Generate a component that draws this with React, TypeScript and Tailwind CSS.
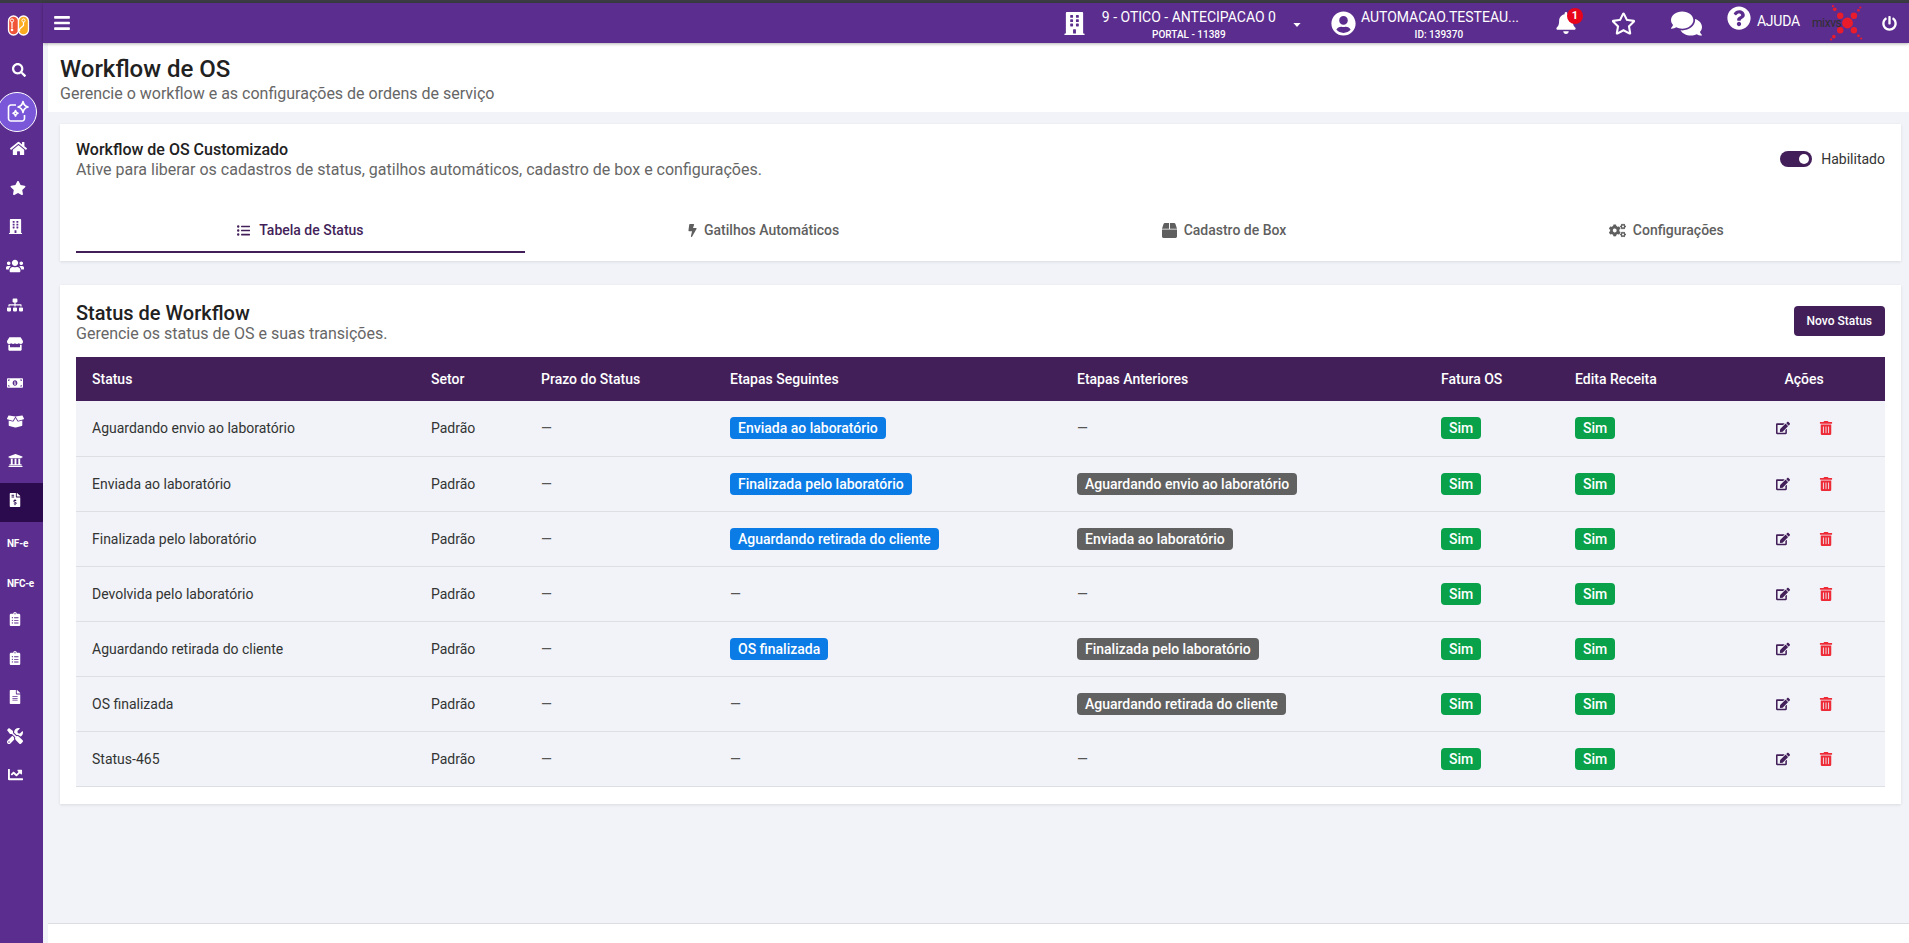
import type { ReactNode } from "react";
import {
  FaBars, FaBell, FaBolt, FaBoxOpen, FaBuilding, FaChartLine, FaClipboardList, FaCogs, FaComments,
  FaEdit, FaFileAlt, FaFileInvoiceDollar, FaHome, FaListUl, FaMoneyBillAlt, FaPowerOff, FaQuestionCircle,
  FaRegStar, FaSearch, FaSitemap, FaStar, FaStore, FaTools, FaTrashAlt, FaUniversity, FaUserCircle, FaUsers, FaBox,
} from "react-icons/fa";

type Row = { status: string; next?: string; prev?: string };

const rows: Row[] = [
  { status: "Aguardando envio ao laboratório", next: "Enviada ao laboratório" },
  { status: "Enviada ao laboratório", next: "Finalizada pelo laboratório", prev: "Aguardando envio ao laboratório" },
  { status: "Finalizada pelo laboratório", next: "Aguardando retirada do cliente", prev: "Enviada ao laboratório" },
  { status: "Devolvida pelo laboratório" },
  { status: "Aguardando retirada do cliente", next: "OS finalizada", prev: "Finalizada pelo laboratório" },
  { status: "OS finalizada", prev: "Aguardando retirada do cliente" },
  { status: "Status-465" },
];

function SideItem({ children, wide }: { children: ReactNode; wide?: boolean }) {
  return (
    <div className={`flex h-[39px] items-center justify-center text-[14px] text-white ${wide ? "pr-[7px]" : "pr-[13px]"}`}>
      {children}
    </div>
  );
}

function Logo() {
  return (
    <svg width="23" height="21" viewBox="0 0 23 21" fill="none">
      <path d="M11.500 15V6a5 5 0 0 0-10 0v9a5 5 0 0 0 10 0z" fill="#f0553a" stroke="#fff" strokeWidth="1.300" />
      <path d="M21.500 15V6a5 5 0 0 0-10 0v9a5 5 0 0 0 10 0z" fill="#fbab1f" stroke="#fff" strokeWidth="1.300" />
      <path d="M5 5.500v8M16.500 5.500v5l-4 3.500" stroke="#fff" strokeWidth="1.200" />
      <circle cx="5" cy="5.500" r="1.600" fill="#f0553a" stroke="#fff" />
      <circle cx="16.500" cy="5.500" r="1.600" fill="#fbab1f" stroke="#fff" />
      <circle cx="5" cy="15" r="1.300" fill="#fff" />
      <circle cx="12" cy="15" r="1.300" fill="#fff" />
    </svg>
  );
}

function MagicIcon() {
  return (
    <svg width="24" height="24" viewBox="0 0 24 24" fill="none" stroke="#fff" strokeWidth="1.600" strokeLinejoin="round">
      <path d="M10 5H5a2.500 2.500 0 0 0-2.500 2.500v11A2.500 2.500 0 0 0 5 21h11a2.500 2.500 0 0 0 2.500-2.500V15" />
      <path d="M17 1.500c.6 3.300 2 4.800 5 5.500-3 .7-4.400 2.200-5 5.500-.6-3.300-2-4.800-5-5.500 3-.7 4.400-2.200 5-5.500z" />
      <path d="M9.500 10.500c.3 1.700 1 2.400 2.500 2.800-1.500.4-2.200 1.100-2.500 2.700-.3-1.600-1-2.300-2.500-2.700 1.500-.4 2.200-1.100 2.500-2.800z" />
    </svg>
  );
}

function MixLogo() {
  // bolinhas vermelhas em X da marca
  const dots = [
    [39, 20, 6], [31, 12, 3.500], [46, 12, 3.500], [31, 28, 3.500], [46, 28, 3.500],
    [25, 5, 2], [51, 6, 1.500], [24, 35, 2], [51, 34, 1.500], [23, 1.500, 1.200], [53, 3, 1.200], [21, 38, 1.200], [54, 37, 1.200],
  ];
  return (
    <div className="relative ml-[12px] h-[40px] w-[51px]">
      <svg className="absolute left-0 top-0" width="51" height="40" viewBox="0 0 56 40">
        {dots.map(([x, y, r]) => (
          <circle key={`${x}-${y}`} cx={x} cy={y} r={r} fill="#ea1c2c" />
        ))}
      </svg>
      <span className="absolute left-0 top-[14px] text-[12px] leading-[12px] tracking-[-0.4px] text-[#2f2f2f]">mixvs</span>
    </div>
  );
}

function Tab({ icon, label, active }: { icon: ReactNode; label: string; active?: boolean }) {
  return (
    <div className={`flex h-[46px] flex-auto items-center justify-center gap-[7px] border-b-2 pt-[2px] text-sm font-medium ${active ? "border-[#431f5a] text-[#431f5a]" : "border-transparent text-[#5f5f5f]"}`}>
      <span className="text-[13px]">{icon}</span>
      {label}
    </div>
  );
}

function Badge({ children, color }: { children: ReactNode; color: string }) {
  return <span className={`inline-block h-[22px] rounded-[4px] px-2 text-sm font-medium leading-[22px] text-white ${color}`}>{children}</span>;
}

export default function App() {
  return (
    <div className="min-h-[943px] bg-[#f1f3f8] font-['Roboto',sans-serif]">
      <div className="h-[3px] bg-[#3b3b43]" />
      <div className="flex h-[940px]">
        {/* menu lateral */}
        <aside className="w-[43px] shrink-0 overflow-hidden bg-[#5b2d8e]">
          <div className="flex h-[40px] items-center justify-center pr-[7px] pt-[4px]">
            <Logo />
          </div>
          <div className="flex h-[49px] items-center justify-center pr-[5px] pt-[5px] text-[14px] text-white">
            <FaSearch />
          </div>
          <div className="-ml-[3px] flex h-[40px] w-[40px] items-center justify-center rounded-full border border-white bg-[#7a57d8] pl-[2px]">
            <MagicIcon />
          </div>
          <div className="-mt-[3px]">
            <SideItem wide><FaHome className="text-[17px]" /></SideItem>
            <SideItem wide><FaStar className="text-[16px]" /></SideItem>
            <SideItem><FaBuilding className="text-[15px]" /></SideItem>
            <SideItem><FaUsers className="text-[18px]" /></SideItem>
            <SideItem><FaSitemap className="text-[16px]" /></SideItem>
            <SideItem><FaStore className="text-[16px]" /></SideItem>
            <SideItem><FaMoneyBillAlt className="text-[16px]" /></SideItem>
            <SideItem><FaBoxOpen className="text-[17px]" /></SideItem>
            <SideItem><FaUniversity className="text-[15px]" /></SideItem>
            <div className="mt-[3px] flex h-[39px] items-center justify-center bg-[#2c0a4e] pb-[5px] pr-[13px] text-[14px] text-white">
              <FaFileInvoiceDollar />
            </div>
            <div className="flex h-[39px] items-center pl-[7px] pt-[3px] text-[10px] font-bold tracking-[-0.2px] text-white">NF-e</div>
            <div className="flex h-[38px] items-center pl-[7px] pt-[6px] text-[10px] font-bold tracking-[-0.3px] text-white">NFC-e</div>
            <SideItem><FaClipboardList /></SideItem>
            <SideItem><FaClipboardList /></SideItem>
            <SideItem><FaFileAlt /></SideItem>
            <SideItem><FaTools className="text-[16px]" /></SideItem>
            <SideItem><FaChartLine className="text-[15px]" /></SideItem>
          </div>
        </aside>

        <div className="flex min-w-0 flex-1 flex-col">
          {/* barra superior */}
          <header className="relative z-10 flex h-[40px] shrink-0 items-center bg-[#5b2d8e] pl-[10px] pr-[12px] text-white shadow-[0_1px_3px_rgba(0,0,0,0.3)]">
            <FaBars className="text-[18px]" />
            <div className="ml-auto flex items-center">
              <FaBuilding className="text-[23px]" />
              <div className="ml-[15px] mt-[2px] w-[176px] text-center">
                <div className="text-sm leading-[20px]">9 - OTICO - ANTECIPACAO 0</div>
                <div className="mt-[2px] text-[10px] font-medium leading-[12px]">PORTAL - 11389</div>
              </div>
              <svg className="ml-[16px] mt-[3px]" width="8" height="4" viewBox="0 0 9 5"><path d="M0 0h9L4.500 5z" fill="#fff" /></svg>
              <FaUserCircle className="ml-[30px] text-[25px]" />
              <div className="ml-[5px] mt-[2px] w-[156px] text-center">
                <div className="text-sm leading-[20px]">AUTOMACAO.TESTEAU...</div>
                <div className="mt-[2px] text-[10px] font-medium leading-[12px]">ID: 139370</div>
              </div>
              <div className="relative ml-[38px]">
                <FaBell className="text-[22px]" />
                <span className="absolute -right-[6px] -top-[4px] flex h-[16px] w-[16px] items-center justify-center rounded-full bg-[#e8041a] text-[11px] font-bold">1</span>
              </div>
              <FaRegStar className="ml-[34px] text-[25px]" />
              <FaComments className="ml-[35px] text-[31px]" />
              <FaQuestionCircle className="mb-[10px] ml-[25px] text-[24px]" />
              <span className="mb-[4px] ml-[6px] text-sm tracking-[-0.2px]">AJUDA</span>
              <MixLogo />
              <FaPowerOff className="ml-[19px] text-[15px]" />
            </div>
          </header>

          <main className="ml-[5px] flex flex-1 flex-col">
            <div className="bg-white px-[12px] pb-[9px] pt-[12px]">
              <h1 className="text-2xl font-medium leading-[29px] text-[#212121]">Workflow de OS</h1>
              <p className="text-[16px] leading-[19px] text-[#666]">Gerencie o workflow e as configurações de ordens de serviço</p>
            </div>

            <div className="flex-1 px-[12px] pr-[8px] pt-[12px]">
              <section className="bg-white px-[16px] shadow-[0_1px_3px_rgba(0,0,0,0.1)]">
                <div className="flex items-start justify-between pt-[16px]">
                  <div>
                    <h2 className="text-[16px] font-medium leading-[20px] text-[#212121]">Workflow de OS Customizado</h2>
                    <p className="text-[16px] leading-[20px] text-[#666]">Ative para liberar os cadastros de status, gatilhos automáticos, cadastro de box e configurações.</p>
                  </div>
                  <div className="mt-[11px] flex items-center gap-[9px]">
                    <div className="flex h-[16px] w-[32px] items-center justify-end rounded-full bg-[#431f5a] pr-[3px]">
                      <div className="h-[10px] w-[10px] rounded-full bg-white" />
                    </div>
                    <span className="text-sm leading-[16px] text-[#333]">Habilitado</span>
                  </div>
                </div>
                <div className="mt-[27px] flex pb-[8px]">
                  <Tab active icon={<FaListUl className="mr-[2px]" />} label="Tabela de Status" />
                  <Tab icon={<FaBolt className="-mr-[2px]" />} label="Gatilhos Automáticos" />
                  <Tab icon={<FaBox className="text-[15px]" />} label="Cadastro de Box" />
                  <Tab icon={<FaCogs className="text-[17px]" />} label="Configurações" />
                </div>
              </section>

              <section className="mt-[24px] bg-white px-[16px] pb-[17px] pt-[16px] shadow-[0_1px_3px_rgba(0,0,0,0.1)]">
                <div className="flex items-start justify-between">
                  <div>
                    <h2 className="text-xl font-medium leading-[24px] text-[#212121]">Status de Workflow</h2>
                    <p className="text-[16px] leading-[17px] text-[#666]">Gerencie os status de OS e suas transições.</p>
                  </div>
                  <button className="mt-[5px] h-[30px] rounded-[4px] bg-[#431f5a] px-[13px] text-xs font-medium text-white">Novo Status</button>
                </div>

                <table className="mt-[15px] w-full table-fixed border-collapse text-left text-sm text-[#333]">
                  <colgroup>
                    <col className="w-[339px]" />
                    <col className="w-[110px]" />
                    <col className="w-[189px]" />
                    <col className="w-[347px]" />
                    <col className="w-[364px]" />
                    <col className="w-[134px]" />
                    <col className="w-[164px]" />
                    <col />
                  </colgroup>
                  <thead className="bg-[#431f5a] text-white">
                    <tr className="h-[44px] font-medium">
                      <th className="pl-[16px] font-medium">Status</th>
                      <th className="pl-[16px] font-medium">Setor</th>
                      <th className="pl-[16px] font-medium">Prazo do Status</th>
                      <th className="pl-[16px] font-medium">Etapas Seguintes</th>
                      <th className="pl-[16px] font-medium">Etapas Anteriores</th>
                      <th className="pl-[16px] font-medium">Fatura OS</th>
                      <th className="pl-[16px] font-medium">Edita Receita</th>
                      <th className="text-center font-medium">Ações</th>
                    </tr>
                  </thead>
                  <tbody>
                    {rows.map((r) => (
                      <tr key={r.status} className="h-[55px] border-b border-[#dedfe3] bg-[#f1f3f8]">
                        <td className="pl-[16px]">{r.status}</td>
                        <td className="pl-[16px]">Padrão</td>
                        <td className="pl-[16px] text-[#555]">—</td>
                        <td className="pl-[16px] text-[#555]">{r.next ? <Badge color="bg-[#0b7be6]">{r.next}</Badge> : "—"}</td>
                        <td className="pl-[16px] text-[#555]">{r.prev ? <Badge color="bg-[#616161]">{r.prev}</Badge> : "—"}</td>
                        <td className="pl-[16px]"><Badge color="bg-[#0aa14b]">Sim</Badge></td>
                        <td className="pl-[16px]"><Badge color="bg-[#0aa14b]">Sim</Badge></td>
                        <td>
                          <div className="flex items-center justify-center gap-[29px] text-[14px]">
                            <FaEdit className="text-[#431f5a]" />
                            <FaTrashAlt className="text-[#ee2a36]" />
                          </div>
                        </td>
                      </tr>
                    ))}
                  </tbody>
                </table>
              </section>
            </div>

            <footer className="h-[20px] shrink-0 border-t border-[#dcdde2] bg-white" />
          </main>
        </div>
      </div>
    </div>
  );
}
